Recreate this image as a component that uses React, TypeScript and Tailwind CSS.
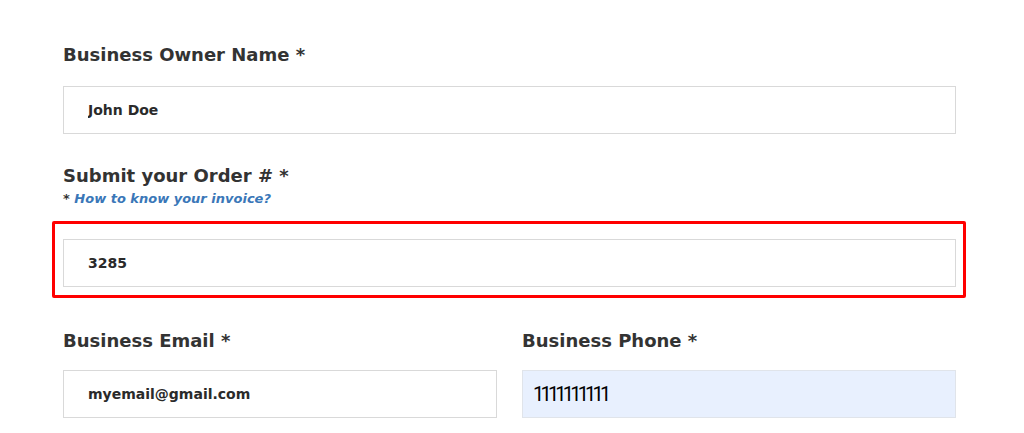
const labelCls = "font-['DejaVu_Sans',sans-serif] text-[18px] leading-[26px] font-bold text-[#333333]"
const inputCls =
  "h-[48px] w-full border border-[#d9d9d9] bg-white px-[24px] font-['DejaVu_Sans',sans-serif] text-[14px] font-bold text-[#2a2a2a] outline-none"

export default function App() {
  return (
    <div className="min-h-screen w-full bg-white">
      <div className="flex w-[1024px] flex-col pt-[42px] pr-[68px] pl-[63px]">
        <label className={labelCls}>Business Owner Name *</label>
        <input className={`${inputCls} mt-[18px]`} defaultValue="John Doe" spellCheck={false} />

        <label className={`${labelCls} mt-[29px]`}>Submit your Order # *</label>
        <p className="mt-[1px] font-['DejaVu_Sans',sans-serif] text-[13px] leading-[18px] font-bold italic text-[#3a77b8]">
          <span className="text-[#333333]">* </span>How to know your invoice?
        </p>

        <div className="mt-[13px] -mr-[10px] -ml-[11px] rounded-[2px] border-[3px] border-[#ff0000] pt-[15px] pr-[7px] pb-[8px] pl-[8px]">
          <input className={inputCls} defaultValue="3285" spellCheck={false} />
        </div>

        <div className="mt-[30px] grid grid-cols-2 gap-x-[25px]">
          <div className="flex flex-col">
            <label className={labelCls}>Business Email *</label>
            <input className={`${inputCls} mt-[16px]`} defaultValue="myemail@gmail.com" spellCheck={false} />
          </div>
          <div className="flex flex-col">
            <label className={labelCls}>Business Phone *</label>
            <input
              className="mt-[16px] h-[48px] w-full border border-[#e0e4ea] bg-[#e8f0fe] px-[10px] font-['Roboto',sans-serif] text-[20px] tracking-[-3.8px] text-black outline-none"
              defaultValue="1111111111"
              spellCheck={false}
            />
          </div>
        </div>
      </div>
    </div>
  )
}
